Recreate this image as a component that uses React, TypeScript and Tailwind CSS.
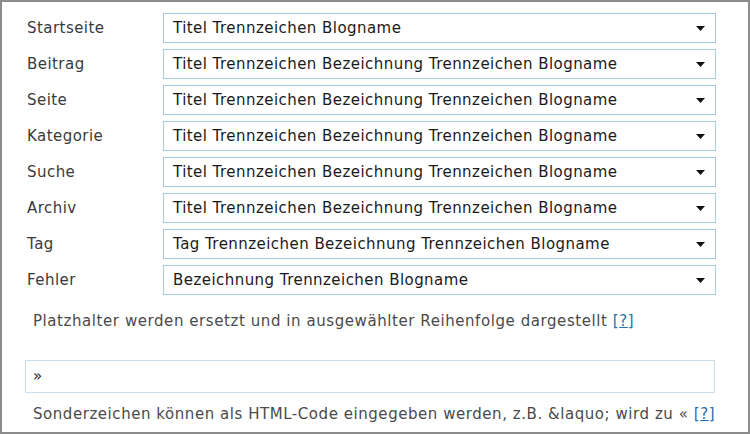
import { useState } from "react"

const rows = [
  { label: "Startseite", value: "Titel Trennzeichen Blogname" },
  { label: "Beitrag", value: "Titel Trennzeichen Bezeichnung Trennzeichen Blogname" },
  { label: "Seite", value: "Titel Trennzeichen Bezeichnung Trennzeichen Blogname" },
  { label: "Kategorie", value: "Titel Trennzeichen Bezeichnung Trennzeichen Blogname" },
  { label: "Suche", value: "Titel Trennzeichen Bezeichnung Trennzeichen Blogname" },
  { label: "Archiv", value: "Titel Trennzeichen Bezeichnung Trennzeichen Blogname" },
  { label: "Tag", value: "Tag Trennzeichen Bezeichnung Trennzeichen Blogname" },
  { label: "Fehler", value: "Bezeichnung Trennzeichen Blogname" },
]

function Caret() {
  return (
    <svg width="9" height="5" viewBox="0 0 9 5" className="shrink-0">
      <path d="M0 0h9L4.5 5z" fill="#111" />
    </svg>
  )
}

function Help() {
  return (
    <span className="text-[#2a6ea6]">
      [<span className="underline">?</span>]
    </span>
  )
}

export default function App() {
  const [sep, setSep] = useState("»")

  return (
    <div className="w-[750px] h-[434px] bg-white border-2 border-[#8c8c8c] font-['DejaVu_Sans',Verdana,sans-serif] text-[15px] tracking-[0.45px] overflow-hidden">
      <div className="pl-[25px] pr-[32px] pt-[11px]">
        <div className="flex flex-col gap-[6px]">
          {rows.map((r) => (
            <div key={r.label} className="flex items-center">
              <div className="w-[136px] text-[#3a3a3a]">{r.label}</div>
              <div className="flex-1 h-[30px] border border-[#a6cbe0] flex items-center justify-between pl-[9px] pr-[10px] text-[#1a1a1a]">
                <span>{r.value}</span>
                <Caret />
              </div>
            </div>
          ))}
        </div>
        <p className="mt-[15px] pl-[6px] text-[#4a4a4a] tracking-[0.57px] whitespace-nowrap">
          Platzhalter werden ersetzt und in ausgewählter Reihenfolge dargestellt <Help />
        </p>
        <input
          value={sep}
          onChange={(e) => setSep(e.target.value)}
          className="mt-[27px] -ml-[2px] w-[calc(100%+1px)] h-[33px] border border-[#c8dfec] pl-[7px] pr-[8px] text-[#1a1a1a] outline-none"
        />
        <p className="mt-[10px] pl-[6px] text-[#4a4a4a] tracking-[0.55px] whitespace-nowrap">
          Sonderzeichen können als HTML-Code eingegeben werden, z.B. &amp;laquo; wird zu « <Help />
        </p>
      </div>
    </div>
  )
}
